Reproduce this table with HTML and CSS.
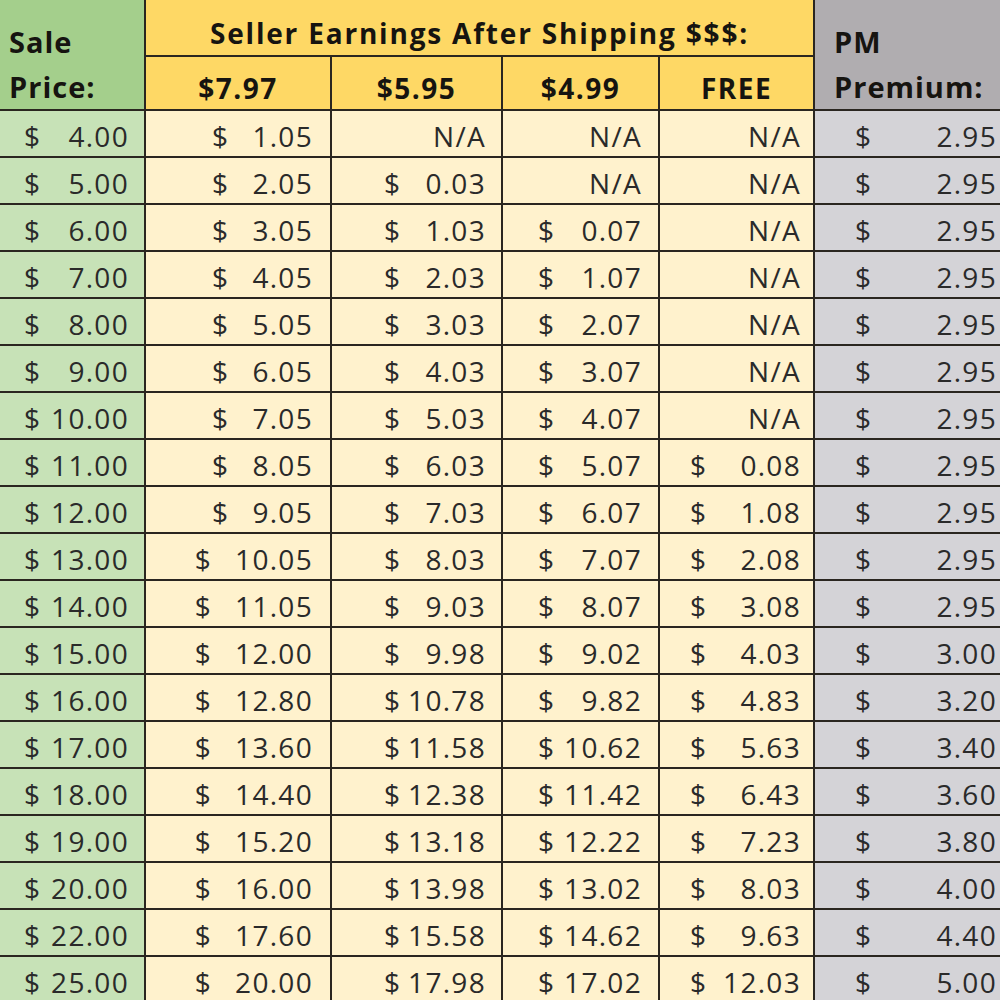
FILE: index.html
```html
<!DOCTYPE html>
<html>
<head>
<meta charset="utf-8">
<link rel="stylesheet" href="styles.css">
</head>
<body>
<div class="sheet">
  <div class="hd green span2 stack"><span>Sale</span><span>Price:</span></div>
  <div class="hd yellow top-title">Seller Earnings After Shipping $$$:</div>
  <div class="hd grey span2 stack pm"><span>PM</span><span>Premium:</span></div>
  <div class="hd yellow sub">$7.97</div>
  <div class="hd yellow sub">$5.95</div>
  <div class="hd yellow sub">$4.99</div>
  <div class="hd yellow sub">FREE</div>

  <div class="c c1"><span>$</span><span>4.00</span></div><div class="c c2"><span>$</span><span>1.05</span></div><div class="c c3 na">N/A</div><div class="c c4 na">N/A</div><div class="c c5 na">N/A</div><div class="c c6"><span>$</span><span>2.95</span></div>
  <div class="c c1"><span>$</span><span>5.00</span></div><div class="c c2"><span>$</span><span>2.05</span></div><div class="c c3"><span>$</span><span>0.03</span></div><div class="c c4 na">N/A</div><div class="c c5 na">N/A</div><div class="c c6"><span>$</span><span>2.95</span></div>
  <div class="c c1"><span>$</span><span>6.00</span></div><div class="c c2"><span>$</span><span>3.05</span></div><div class="c c3"><span>$</span><span>1.03</span></div><div class="c c4"><span>$</span><span>0.07</span></div><div class="c c5 na">N/A</div><div class="c c6"><span>$</span><span>2.95</span></div>
  <div class="c c1"><span>$</span><span>7.00</span></div><div class="c c2"><span>$</span><span>4.05</span></div><div class="c c3"><span>$</span><span>2.03</span></div><div class="c c4"><span>$</span><span>1.07</span></div><div class="c c5 na">N/A</div><div class="c c6"><span>$</span><span>2.95</span></div>
  <div class="c c1"><span>$</span><span>8.00</span></div><div class="c c2"><span>$</span><span>5.05</span></div><div class="c c3"><span>$</span><span>3.03</span></div><div class="c c4"><span>$</span><span>2.07</span></div><div class="c c5 na">N/A</div><div class="c c6"><span>$</span><span>2.95</span></div>
  <div class="c c1"><span>$</span><span>9.00</span></div><div class="c c2"><span>$</span><span>6.05</span></div><div class="c c3"><span>$</span><span>4.03</span></div><div class="c c4"><span>$</span><span>3.07</span></div><div class="c c5 na">N/A</div><div class="c c6"><span>$</span><span>2.95</span></div>
  <div class="c c1"><span>$</span><span>10.00</span></div><div class="c c2"><span>$</span><span>7.05</span></div><div class="c c3"><span>$</span><span>5.03</span></div><div class="c c4"><span>$</span><span>4.07</span></div><div class="c c5 na">N/A</div><div class="c c6"><span>$</span><span>2.95</span></div>
  <div class="c c1"><span>$</span><span>11.00</span></div><div class="c c2"><span>$</span><span>8.05</span></div><div class="c c3"><span>$</span><span>6.03</span></div><div class="c c4"><span>$</span><span>5.07</span></div><div class="c c5"><span>$</span><span>0.08</span></div><div class="c c6"><span>$</span><span>2.95</span></div>
  <div class="c c1"><span>$</span><span>12.00</span></div><div class="c c2"><span>$</span><span>9.05</span></div><div class="c c3"><span>$</span><span>7.03</span></div><div class="c c4"><span>$</span><span>6.07</span></div><div class="c c5"><span>$</span><span>1.08</span></div><div class="c c6"><span>$</span><span>2.95</span></div>
  <div class="c c1"><span>$</span><span>13.00</span></div><div class="c c2"><span>$</span><span>10.05</span></div><div class="c c3"><span>$</span><span>8.03</span></div><div class="c c4"><span>$</span><span>7.07</span></div><div class="c c5"><span>$</span><span>2.08</span></div><div class="c c6"><span>$</span><span>2.95</span></div>
  <div class="c c1"><span>$</span><span>14.00</span></div><div class="c c2"><span>$</span><span>11.05</span></div><div class="c c3"><span>$</span><span>9.03</span></div><div class="c c4"><span>$</span><span>8.07</span></div><div class="c c5"><span>$</span><span>3.08</span></div><div class="c c6"><span>$</span><span>2.95</span></div>
  <div class="c c1"><span>$</span><span>15.00</span></div><div class="c c2"><span>$</span><span>12.00</span></div><div class="c c3"><span>$</span><span>9.98</span></div><div class="c c4"><span>$</span><span>9.02</span></div><div class="c c5"><span>$</span><span>4.03</span></div><div class="c c6"><span>$</span><span>3.00</span></div>
  <div class="c c1"><span>$</span><span>16.00</span></div><div class="c c2"><span>$</span><span>12.80</span></div><div class="c c3"><span>$</span><span>10.78</span></div><div class="c c4"><span>$</span><span>9.82</span></div><div class="c c5"><span>$</span><span>4.83</span></div><div class="c c6"><span>$</span><span>3.20</span></div>
  <div class="c c1"><span>$</span><span>17.00</span></div><div class="c c2"><span>$</span><span>13.60</span></div><div class="c c3"><span>$</span><span>11.58</span></div><div class="c c4"><span>$</span><span>10.62</span></div><div class="c c5"><span>$</span><span>5.63</span></div><div class="c c6"><span>$</span><span>3.40</span></div>
  <div class="c c1"><span>$</span><span>18.00</span></div><div class="c c2"><span>$</span><span>14.40</span></div><div class="c c3"><span>$</span><span>12.38</span></div><div class="c c4"><span>$</span><span>11.42</span></div><div class="c c5"><span>$</span><span>6.43</span></div><div class="c c6"><span>$</span><span>3.60</span></div>
  <div class="c c1"><span>$</span><span>19.00</span></div><div class="c c2"><span>$</span><span>15.20</span></div><div class="c c3"><span>$</span><span>13.18</span></div><div class="c c4"><span>$</span><span>12.22</span></div><div class="c c5"><span>$</span><span>7.23</span></div><div class="c c6"><span>$</span><span>3.80</span></div>
  <div class="c c1"><span>$</span><span>20.00</span></div><div class="c c2"><span>$</span><span>16.00</span></div><div class="c c3"><span>$</span><span>13.98</span></div><div class="c c4"><span>$</span><span>13.02</span></div><div class="c c5"><span>$</span><span>8.03</span></div><div class="c c6"><span>$</span><span>4.00</span></div>
  <div class="c c1"><span>$</span><span>22.00</span></div><div class="c c2"><span>$</span><span>17.60</span></div><div class="c c3"><span>$</span><span>15.58</span></div><div class="c c4"><span>$</span><span>14.62</span></div><div class="c c5"><span>$</span><span>9.63</span></div><div class="c c6"><span>$</span><span>4.40</span></div>
  <div class="c c1"><span>$</span><span>25.00</span></div><div class="c c2"><span>$</span><span>20.00</span></div><div class="c c3"><span>$</span><span>17.98</span></div><div class="c c4"><span>$</span><span>17.02</span></div><div class="c c5"><span>$</span><span>12.03</span></div><div class="c c6"><span>$</span><span>5.00</span></div>
</div>
</body>
</html>
```

FILE: styles.css
```css
html, body {
  margin: 0;
  padding: 0;
  background: #2a2620;
  overflow: hidden;
}

.sheet {
  display: grid;
  grid-template-columns: 144px 184px 169px 155px 153px 185px;
  grid-template-rows: 55px 52px repeat(19, 45px);
  gap: 2px;
  width: 1000px;
  background: #2a2620;
  font-family: "Open Sans", Lato, sans-serif;
  color: #2a2a2a;
}

.hd {
  font-weight: 700;
  color: #161410;
}

.green { background: #a4cf8c; }
.yellow { background: #fed865; }
.grey { background: #b0adb0; }

.span2 { grid-row: span 2; }

.stack {
  display: flex;
  flex-direction: column;
  justify-content: flex-end;
  font-size: 29px;
  letter-spacing: 1px;
  line-height: 45px;
  padding: 0 0 0 9px;
}

.pm { padding-left: 19px; }

.top-title {
  grid-column: 2 / span 4;
  font-size: 28px;
  letter-spacing: 1.8px;
  display: flex;
  align-items: center;
  justify-content: center;
  padding-top: 10px;
}

.sub {
  font-size: 28px;
  letter-spacing: 1.5px;
  display: flex;
  align-items: center;
  justify-content: center;
  padding-top: 10px;
}

.c {
  font-size: 28px;
  letter-spacing: 1.3px;
  display: flex;
  align-items: center;
  justify-content: space-between;
  padding-top: 5px;
  background: #fff2cd;
}

.c1 { background: #c7e2b7; padding-left: 24px; padding-right: 15px; }
.c2 { justify-content: flex-end; gap: 23px; padding-right: 17px; }
.c3 { padding-left: 52px; padding-right: 15px; }
.c4 { padding-left: 35px; padding-right: 16px; }
.c5 { padding-left: 30px; padding-right: 12px; }
.c6 { background: #d4d3d7; padding-left: 40px; padding-right: 3px; }

.na { justify-content: flex-end; }
```
